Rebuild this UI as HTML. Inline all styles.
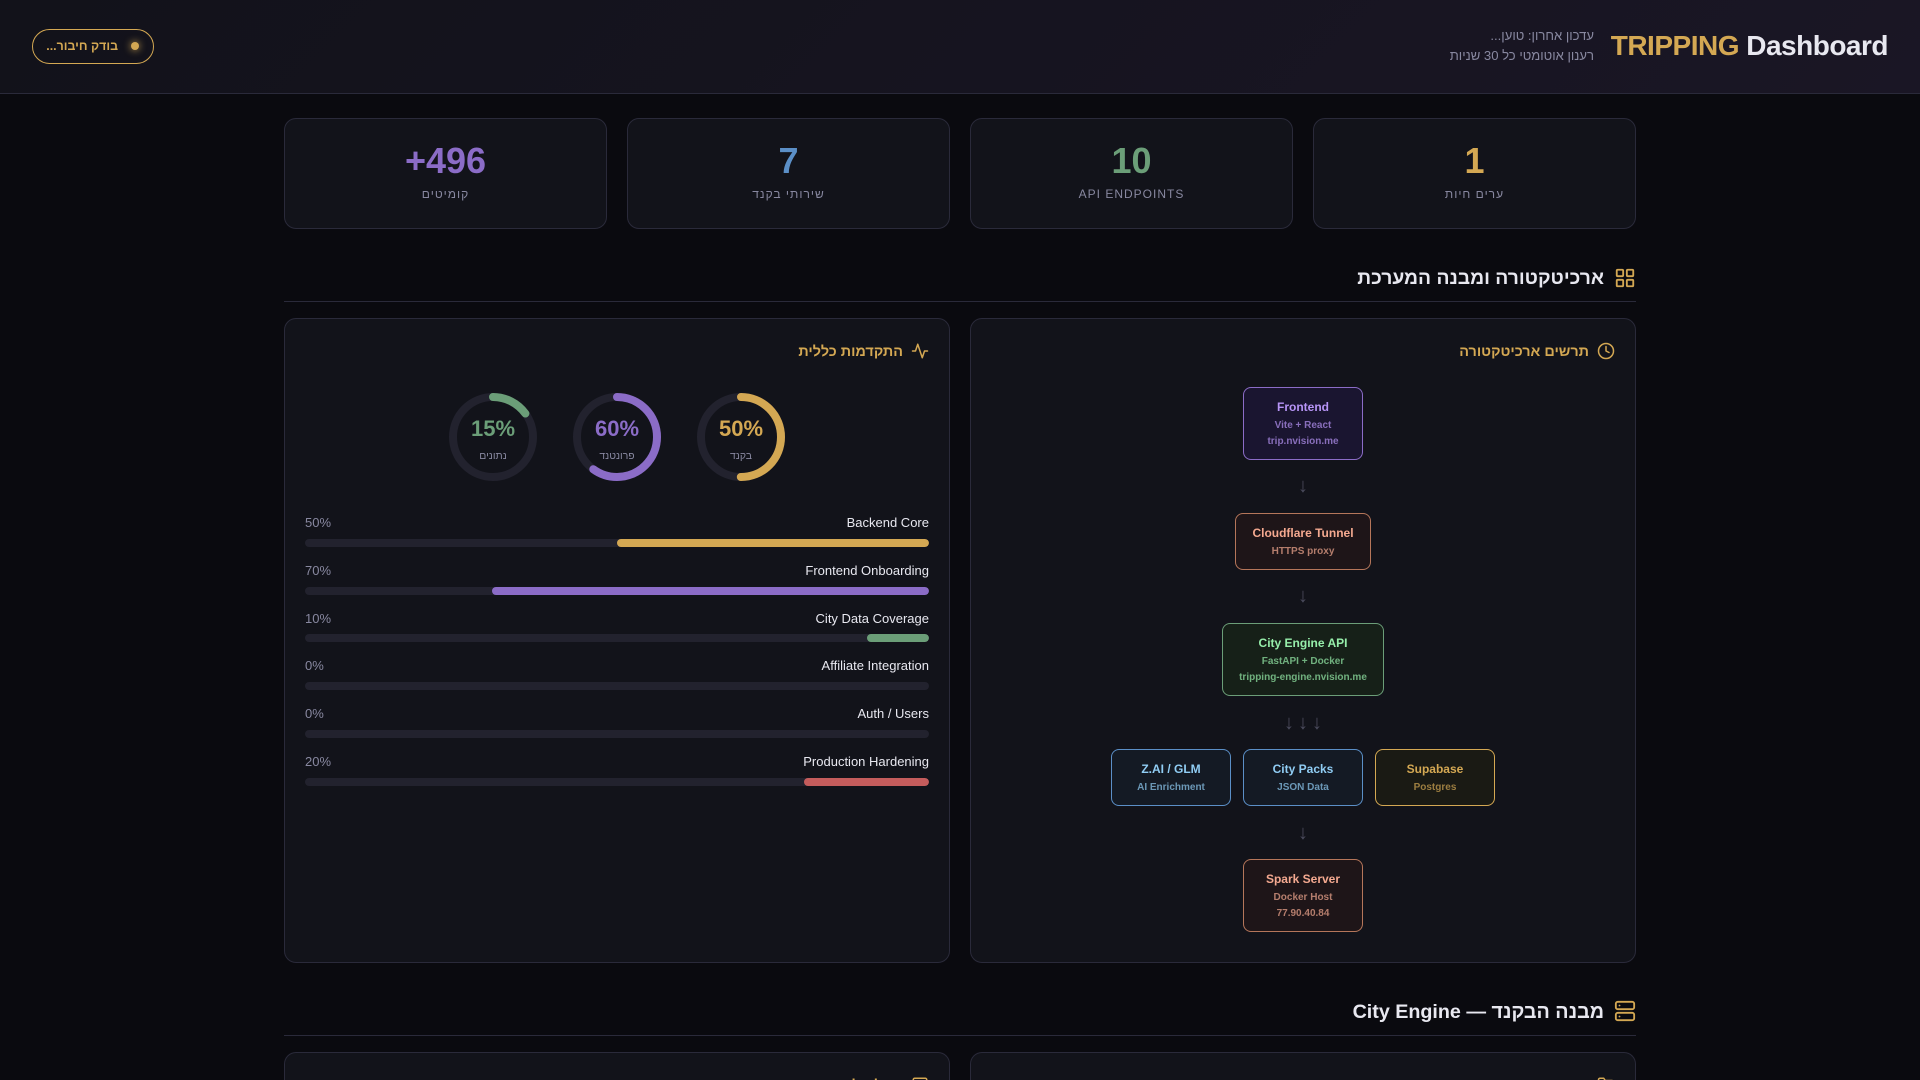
<!DOCTYPE html>
<html lang="he" dir="rtl">
<head>
<meta charset="utf-8">
<title>TRIPPING Dashboard</title>
<style>
*{box-sizing:border-box;margin:0;padding:0}
html,body{width:1920px;height:1080px;overflow:hidden;background:#0a0a0f}
body{position:relative;font-family:"Liberation Sans","Noto Sans CJK JP",sans-serif;color:#e8e8f0}
.a{position:absolute;white-space:nowrap}
header{position:absolute;left:0;top:0;width:1920px;height:94px;background:linear-gradient(135deg,#12121a,#1a1625);border-bottom:1px solid #2a2a3a}
.card{position:absolute;top:118px;width:323px;height:111px;background:#12131a;border:1px solid #2a2a3a;border-radius:12px;text-align:center}
.card b{position:absolute;left:0;right:0;top:19px;font-size:36px;line-height:46px;font-weight:700}
.card span{position:absolute;left:0;right:0;top:65px;font-size:12px;line-height:20px;letter-spacing:1px;color:#8888a0}
.panel{position:absolute;width:666px;background:#12131a;border:1px solid #2a2a3a;border-radius:12px}
.sec{font-weight:700;line-height:30px;color:#e8e8f0}
.line{position:absolute;left:284px;width:1352px;height:1px;background:#2a2a3a}
.ph{font-size:14.4px;font-weight:700;line-height:20px;color:#d4a853}
.lbl{font-size:13px;line-height:20px;color:#e8e8f0;right:991px}
.pct{font-size:13px;line-height:20px;color:#8888a0;left:305px;direction:ltr}
.track{position:absolute;left:305px;width:624px;height:8px;border-radius:4px;background:#22222e;overflow:hidden}
.track i{position:absolute;right:0;top:0;height:8px;border-radius:4px;display:block}
.box{position:absolute;border:1px solid;border-radius:8px;text-align:center;padding:10px 0;direction:ltr}
.box b{display:block;font-size:12px;line-height:18px;font-weight:700}
.box span{display:block;position:relative;top:2px;font-size:10px;line-height:16px;font-weight:700;opacity:.7}
.arr{position:absolute;font-size:20px;line-height:20px;color:#4a4a5c;width:20px;text-align:center;direction:ltr}
.rv{font-size:22px;font-weight:700;line-height:26px;text-align:center;width:88px;direction:ltr}
.rl{font-size:10.4px;line-height:14px;color:#8888a0;text-align:center;width:88px}
svg.i{position:absolute;fill:none;stroke:#d4a853;stroke-width:2;stroke-linecap:round;stroke-linejoin:round}
</style>
</head>
<body>
<header></header>
<div class="a" style="left:32px;top:29px;width:122px;height:35px;border:1px solid #d4a853;border-radius:18px"></div>
<div class="a" style="left:131px;top:42px;width:8px;height:8px;border-radius:50%;background:#d4a853;box-shadow:0 0 8px #d4a853"></div>
<div class="a" style="right:1802px;top:36px;font-size:12.4px;line-height:20px;font-weight:700;color:#d4a853">בודק חיבור...</div>

<div class="a" dir="ltr" style="right:32px;top:28px;font-size:28px;line-height:36px;font-weight:700;letter-spacing:-.5px;color:#e8e8f0"><span style="color:#d4a853">TRIPPING</span> Dashboard</div>
<div class="a" style="right:326px;top:26px;font-size:13.1px;line-height:20px;color:#8888a0">עדכון אחרון: טוען...</div>
<div class="a" style="right:326px;top:46px;font-size:13.1px;line-height:20px;color:#8888a0">רענון אוטומטי כל 30 שניות</div>

<div class="card" style="left:1313px"><b style="color:#d4a853">1</b><span>ערים חיות</span></div>
<div class="card" style="left:970px"><b style="color:#6b9e78">10</b><span>API ENDPOINTS</span></div>
<div class="card" style="left:627px"><b style="color:#5b8fc7">7</b><span>שירותי בקנד</span></div>
<div class="card" style="left:284px"><b style="color:#8b6cc7" dir="ltr">+496</b><span>קומיטים</span></div>

<svg class="i" style="left:1614px;top:267px" width="22" height="22" viewBox="0 0 24 24"><rect x="3" y="3" width="7" height="7" rx="1"/><rect x="14" y="3" width="7" height="7" rx="1"/><rect x="14" y="14" width="7" height="7" rx="1"/><rect x="3" y="14" width="7" height="7" rx="1"/></svg>
<div class="a sec" style="right:316px;top:264px;font-size:19.3px">ארכיטקטורה ומבנה המערכת</div>
<div class="line" style="top:301px"></div>

<div class="panel" style="left:970px;top:318px;height:645px"></div>
<div class="panel" style="left:284px;top:318px;height:645px"></div>

<svg class="i" style="left:1597px;top:342px" width="18" height="18" viewBox="0 0 24 24"><circle cx="12" cy="12" r="10"/><polyline points="12 6 12 12 16 14"/></svg>
<div class="a ph" style="right:331px;top:342px">תרשים ארכיטקטורה</div>
<svg class="i" style="left:911px;top:342px" width="18" height="18" viewBox="0 0 24 24"><polyline points="22 12 18 12 15 21 9 3 6 12 2 12"/></svg>
<div class="a ph" style="right:1017px;top:342px">התקדמות כללית</div>

<svg class="a" style="left:697px;top:393px" width="88" height="88" viewBox="0 0 88 88"><circle cx="44" cy="44" r="40" fill="none" stroke="#22222e" stroke-width="8"/><circle cx="44" cy="44" r="40" fill="none" stroke="#d4a853" stroke-width="8" stroke-linecap="round" stroke-dasharray="125.66 251.33" transform="rotate(-90 44 44)"/></svg>
<div class="a rv" style="left:697px;top:416px;color:#d4a853">50%</div>
<div class="a rl" style="left:697px;top:448px;margin-top:2px">בקנד</div>
<svg class="a" style="left:573px;top:393px" width="88" height="88" viewBox="0 0 88 88"><circle cx="44" cy="44" r="40" fill="none" stroke="#22222e" stroke-width="8"/><circle cx="44" cy="44" r="40" fill="none" stroke="#8b6cc7" stroke-width="8" stroke-linecap="round" stroke-dasharray="150.8 251.33" transform="rotate(-90 44 44)"/></svg>
<div class="a rv" style="left:573px;top:416px;color:#8b6cc7">60%</div>
<div class="a rl" style="left:573px;top:448px;margin-top:2px">פרונטנד</div>
<svg class="a" style="left:449px;top:393px" width="88" height="88" viewBox="0 0 88 88"><circle cx="44" cy="44" r="40" fill="none" stroke="#22222e" stroke-width="8"/><circle cx="44" cy="44" r="40" fill="none" stroke="#6b9e78" stroke-width="8" stroke-linecap="round" stroke-dasharray="37.7 251.33" transform="rotate(-90 44 44)"/></svg>
<div class="a rv" style="left:449px;top:416px;color:#6b9e78">15%</div>
<div class="a rl" style="left:449px;top:448px;margin-top:2px">נתונים</div>

<div class="a lbl" style="top:513px">Backend Core</div><div class="a pct" style="top:513px">50%</div>
<div class="track" style="top:539px"><i style="width:50%;background:#d4a853"></i></div>
<div class="a lbl" style="top:561px">Frontend Onboarding</div><div class="a pct" style="top:561px">70%</div>
<div class="track" style="top:587px"><i style="width:70%;background:#8b6cc7"></i></div>
<div class="a lbl" style="top:609px">City Data Coverage</div><div class="a pct" style="top:609px">10%</div>
<div class="track" style="top:634px"><i style="width:10%;background:#6b9e78"></i></div>
<div class="a lbl" style="top:656px">Affiliate Integration</div><div class="a pct" style="top:656px">0%</div>
<div class="track" style="top:682px"></div>
<div class="a lbl" style="top:704px">Auth / Users</div><div class="a pct" style="top:704px">0%</div>
<div class="track" style="top:730px"></div>
<div class="a lbl" style="top:752px">Production Hardening</div><div class="a pct" style="top:752px">20%</div>
<div class="track" style="top:778px"><i style="width:20%;background:#c45c5c"></i></div>

<div class="box" style="left:1243px;top:387px;width:120px;height:73px;background:#1a1530;border-color:#8b6cc7;color:#b794f6"><b>Frontend</b><span>Vite + React</span><span>trip.nvision.me</span></div>
<div class="arr" style="left:1293px;top:476px">↓</div>
<div class="box" style="left:1235px;top:513px;width:136px;height:57px;background:#1e1518;border-color:#b5765a;color:#f4a990"><b>Cloudflare Tunnel</b><span>HTTPS proxy</span></div>
<div class="arr" style="left:1293px;top:586px">↓</div>
<div class="box" style="left:1222px;top:623px;width:162px;height:73px;background:#162018;border-color:#6b9e78;color:#96eeaa"><b>City Engine API</b><span>FastAPI + Docker</span><span>tripping-engine.nvision.me</span></div>
<div class="arr" style="left:1279px;top:713px">↓</div>
<div class="arr" style="left:1293px;top:713px">↓</div>
<div class="arr" style="left:1307px;top:713px">↓</div>
<div class="box" style="left:1111px;top:749px;width:120px;height:57px;background:#141a24;border-color:#5b8fc7;color:#90cdf4"><b>Z.AI / GLM</b><span>AI Enrichment</span></div>
<div class="box" style="left:1243px;top:749px;width:120px;height:57px;background:#141a24;border-color:#5b8fc7;color:#90cdf4"><b>City Packs</b><span>JSON Data</span></div>
<div class="box" style="left:1375px;top:749px;width:120px;height:57px;background:#1a1a14;border-color:#d4a853;color:#d4a853"><b>Supabase</b><span>Postgres</span></div>
<div class="arr" style="left:1293px;top:823px">↓</div>
<div class="box" style="left:1243px;top:859px;width:120px;height:73px;background:#1e1518;border-color:#b5765a;color:#f4a990"><b>Spark Server</b><span>Docker Host</span><span>77.90.40.84</span></div>

<svg class="i" style="left:1614px;top:1000px" width="22" height="22" viewBox="0 0 24 24"><rect x="2" y="2" width="20" height="8" rx="2"/><rect x="2" y="14" width="20" height="8" rx="2"/><line x1="6" y1="6" x2="6.01" y2="6"/><line x1="6" y1="18" x2="6.01" y2="18"/></svg>
<div class="a sec" style="right:316px;top:997px;font-size:19.7px">מבנה הבקנד — City Engine</div>
<div class="line" style="top:1035px"></div>

<div class="a" style="left:0;top:1052px;width:1920px;height:28px;overflow:hidden">
<div class="panel" style="left:970px;top:0;height:28px;border-bottom:0;border-radius:12px 12px 0 0"></div>
<div class="panel" style="left:284px;top:0;height:28px;border-bottom:0;border-radius:12px 12px 0 0"></div>
<svg class="i" style="left:1597px;top:24px;height:4px;width:18px" viewBox="0 0 24 5.33" preserveAspectRatio="xMidYMin slice"><path d="M22 19a2 2 0 0 1-2 2H4a2 2 0 0 1-2-2V5a2 2 0 0 1 2-2h5l2 3h9a2 2 0 0 1 2 2z"/></svg>
<svg class="i" style="left:911px;top:24px;height:4px;width:18px" viewBox="0 0 24 5.33" preserveAspectRatio="xMidYMin slice"><rect x="3" y="3" width="18" height="18" rx="2"/></svg>
<div class="a ph" style="right:1017px;top:24px;height:4px;overflow:hidden">מטלת לוח</div>
</div>
</body>
</html>
